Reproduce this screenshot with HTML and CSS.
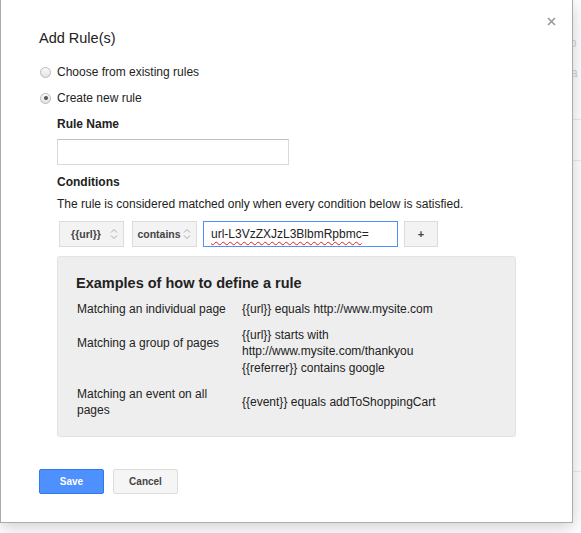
FILE: index.html
```html
<!DOCTYPE html>
<html lang="en">
<head>
  <meta charset="UTF-8" />
  <title>Add Rule(s)</title>
  <link rel="stylesheet" href="styles.css">
</head>
<body>
  <div class="page">
    <div class="bg-text first">ip</div>
    <div class="bg-text">ra</div>
    <div class="bg-line l1"></div>
    <div class="bg-line l2"></div>
    <div class="bg-line l3"></div>
  </div>

  <div class="dialog">
    <span class="close">
      <svg width="9" height="9" viewBox="0 0 9 9"><path d="M1 1L8 8M8 1L1 8" stroke="#999" stroke-width="1.6" fill="none"/></svg>
    </span>
    <h2 class="title">Add Rule(s)</h2>

    <label class="radio-row first">
      <span class="radio"></span>
      <span>Choose from existing rules</span>
    </label>
    <label class="radio-row">
      <span class="radio checked"></span>
      <span>Create new rule</span>
    </label>

    <div class="section">
      <div class="field-label">Rule Name</div>
      <input class="text-input" type="text" />

      <div class="field-label conditions">Conditions</div>
      <p class="hint">The rule is considered matched only when every condition below is satisfied.</p>

      <div class="condition">
        <div class="select first">
          <span class="select-text">{{url}}</span>
          <svg width="8" height="12" viewBox="0 0 8 12"><path d="M1 4.5L4 1.5L7 4.5M1 7.5L4 10.5L7 7.5" stroke="#aaa" stroke-width="1" fill="none"/></svg>
        </div>
        <div class="select">
          <span class="select-text">contains</span>
          <svg width="8" height="12" viewBox="0 0 8 12"><path d="M1 4.5L4 1.5L7 4.5M1 7.5L4 10.5L7 7.5" stroke="#aaa" stroke-width="1" fill="none"/></svg>
        </div>
        <div class="value-input"><span class="misspelled">url-L3VzZXJzL3BlbmRpbmc</span>=</div>
        <div class="small-btn">+</div>
      </div>

      <div class="examples">
        <h3>Examples of how to define a rule</h3>
        <div class="ex-row">
          <div class="ex-label">Matching an individual page</div>
          <div class="ex-value">{{url}} equals http://www.mysite.com</div>
        </div>
        <div class="ex-row">
          <div class="ex-label">Matching a group of pages</div>
          <div class="ex-value">{{url}} starts with http://www.mysite.com/thankyou</div>
        </div>
        <div class="ex-row cont">
          <div class="ex-label"></div>
          <div class="ex-value">{{referrer}} contains google</div>
        </div>
        <div class="ex-row">
          <div class="ex-label">Matching an event on all pages</div>
          <div class="ex-value">{{event}} equals addToShoppingCart</div>
        </div>
      </div>
    </div>

    <div class="buttons">
      <button class="btn primary">Save</button>
      <button class="btn">Cancel</button>
    </div>
  </div>
</body>
</html>
```

FILE: styles.css
```css
* { box-sizing: border-box; }
body {
  margin: 0;
  font-family: "Liberation Sans", Arial, sans-serif;
  font-size: 12px;
  color: #222;
  background: #fff;
  overflow: hidden;
}

/* page behind the dialog */
.page {
  padding-left: 567px;
  color: #d4d4d4;
  font-size: 12px;
}
.bg-text {
  line-height: 16px;
  margin-top: 14px;
}
.bg-text.first { margin-top: 35px; }
.bg-line { border-top: 1px solid #ececec; }
.bg-line.l1 { margin-top: 38px; }
.bg-line.l2 { margin-top: 40px; }
.bg-line.l3 { margin-top: 310px; }

/* dialog */
.dialog {
  position: absolute;
  top: 0;
  left: 0;
  width: 573px;
  background: #fff;
  border: 1px solid #acacac;
  border-top: none;
  box-shadow: 0 4px 16px rgba(0, 0, 0, 0.2);
  padding: 29px 38px 28px;
}
.close {
  position: absolute;
  top: 17px;
  right: 16px;
  display: flex;
  cursor: pointer;
}
.title {
  margin: 0;
  font-size: 14.5px;
  font-weight: normal;
  line-height: 18px;
  color: #222;
}

.radio-row {
  display: flex;
  align-items: center;
  gap: 6px;
  line-height: 16px;
  margin-top: 10px;
}
.radio-row.first { margin-top: 17px; }
.radio {
  width: 11px;
  height: 11px;
  margin-left: 1px;
  border-radius: 50%;
  border: 1px solid #b9b9b9;
  background: linear-gradient(#fbfbfb, #e2e2e2);
  display: flex;
  align-items: center;
  justify-content: center;
}
.radio.checked::after {
  content: "";
  width: 4px;
  height: 4px;
  border-radius: 50%;
  background: #555;
}

.section { padding-left: 18px; }
.field-label {
  font-weight: bold;
  line-height: 16px;
  margin-top: 10px;
}
.field-label.conditions { margin-top: 9px; }
.text-input {
  display: block;
  width: 232px;
  height: 26px;
  margin-top: 7px;
  border: 1px solid #d9d9d9;
  border-top-color: #c0c0c0;
  font: inherit;
  padding: 0 8px;
}
.hint {
  margin: 6px 0 0;
  line-height: 16px;
}

.condition {
  display: flex;
  margin-top: 9px;
  height: 26px;
}
.select {
  width: 65px;
  display: flex;
  align-items: center;
  padding: 0 5px 0 2px;
  background: #f3f3f3;
  border: 1px solid #dcdcdc;
  color: #444;
  font-size: 10.5px;
  font-weight: bold;
  margin-right: 6px;
}
.select.first { margin-left: 2px; margin-right: 8px; }
.select-text {
  flex: 1;
  text-align: center;
}
.value-input {
  width: 195px;
  border: 1px solid #4d90fe;
  padding-left: 7px;
  line-height: 24px;
  color: #222;
}
.misspelled {
  text-decoration: underline wavy #e02020;
  text-decoration-thickness: 1px;
  text-underline-offset: 3px;
}
.small-btn {
  width: 34px;
  margin-left: 6px;
  background: #f3f3f3;
  border: 1px solid #dcdcdc;
  color: #444;
  font-weight: bold;
  font-size: 11px;
  display: flex;
  align-items: center;
  justify-content: center;
}

.examples {
  margin-top: 9px;
  width: 459px;
  background: #eee;
  border: 1px solid #e3e3e3;
  border-radius: 3px;
  padding: 17px 18px 17.5px 18px;
}
.examples h3 {
  margin: 0;
  font-size: 14.5px;
  line-height: 18px;
  color: #222;
}
.ex-row {
  display: flex;
  align-items: center;
  line-height: 16.5px;
  margin-top: 9.5px;
}
.ex-row.cont { margin-top: 0; }
.ex-row:nth-child(2) { margin-top: 8.75px; }
.ex-label {
  width: 155px;
  margin-right: 11px;
  padding-left: 1px;
}
.ex-value { flex: 1; }

.buttons {
  display: flex;
  gap: 9px;
  margin-top: 32px;
}
.btn {
  width: 65px;
  height: 25px;
  font-family: inherit;
  font-size: 10px;
  font-weight: bold;
  color: #444;
  background: #f5f5f5;
  border: 1px solid #dcdcdc;
  border-radius: 2px;
  cursor: pointer;
}
.btn.primary {
  color: #fff;
  background: #4d90fe;
  border-color: #3079ed;
}
```
